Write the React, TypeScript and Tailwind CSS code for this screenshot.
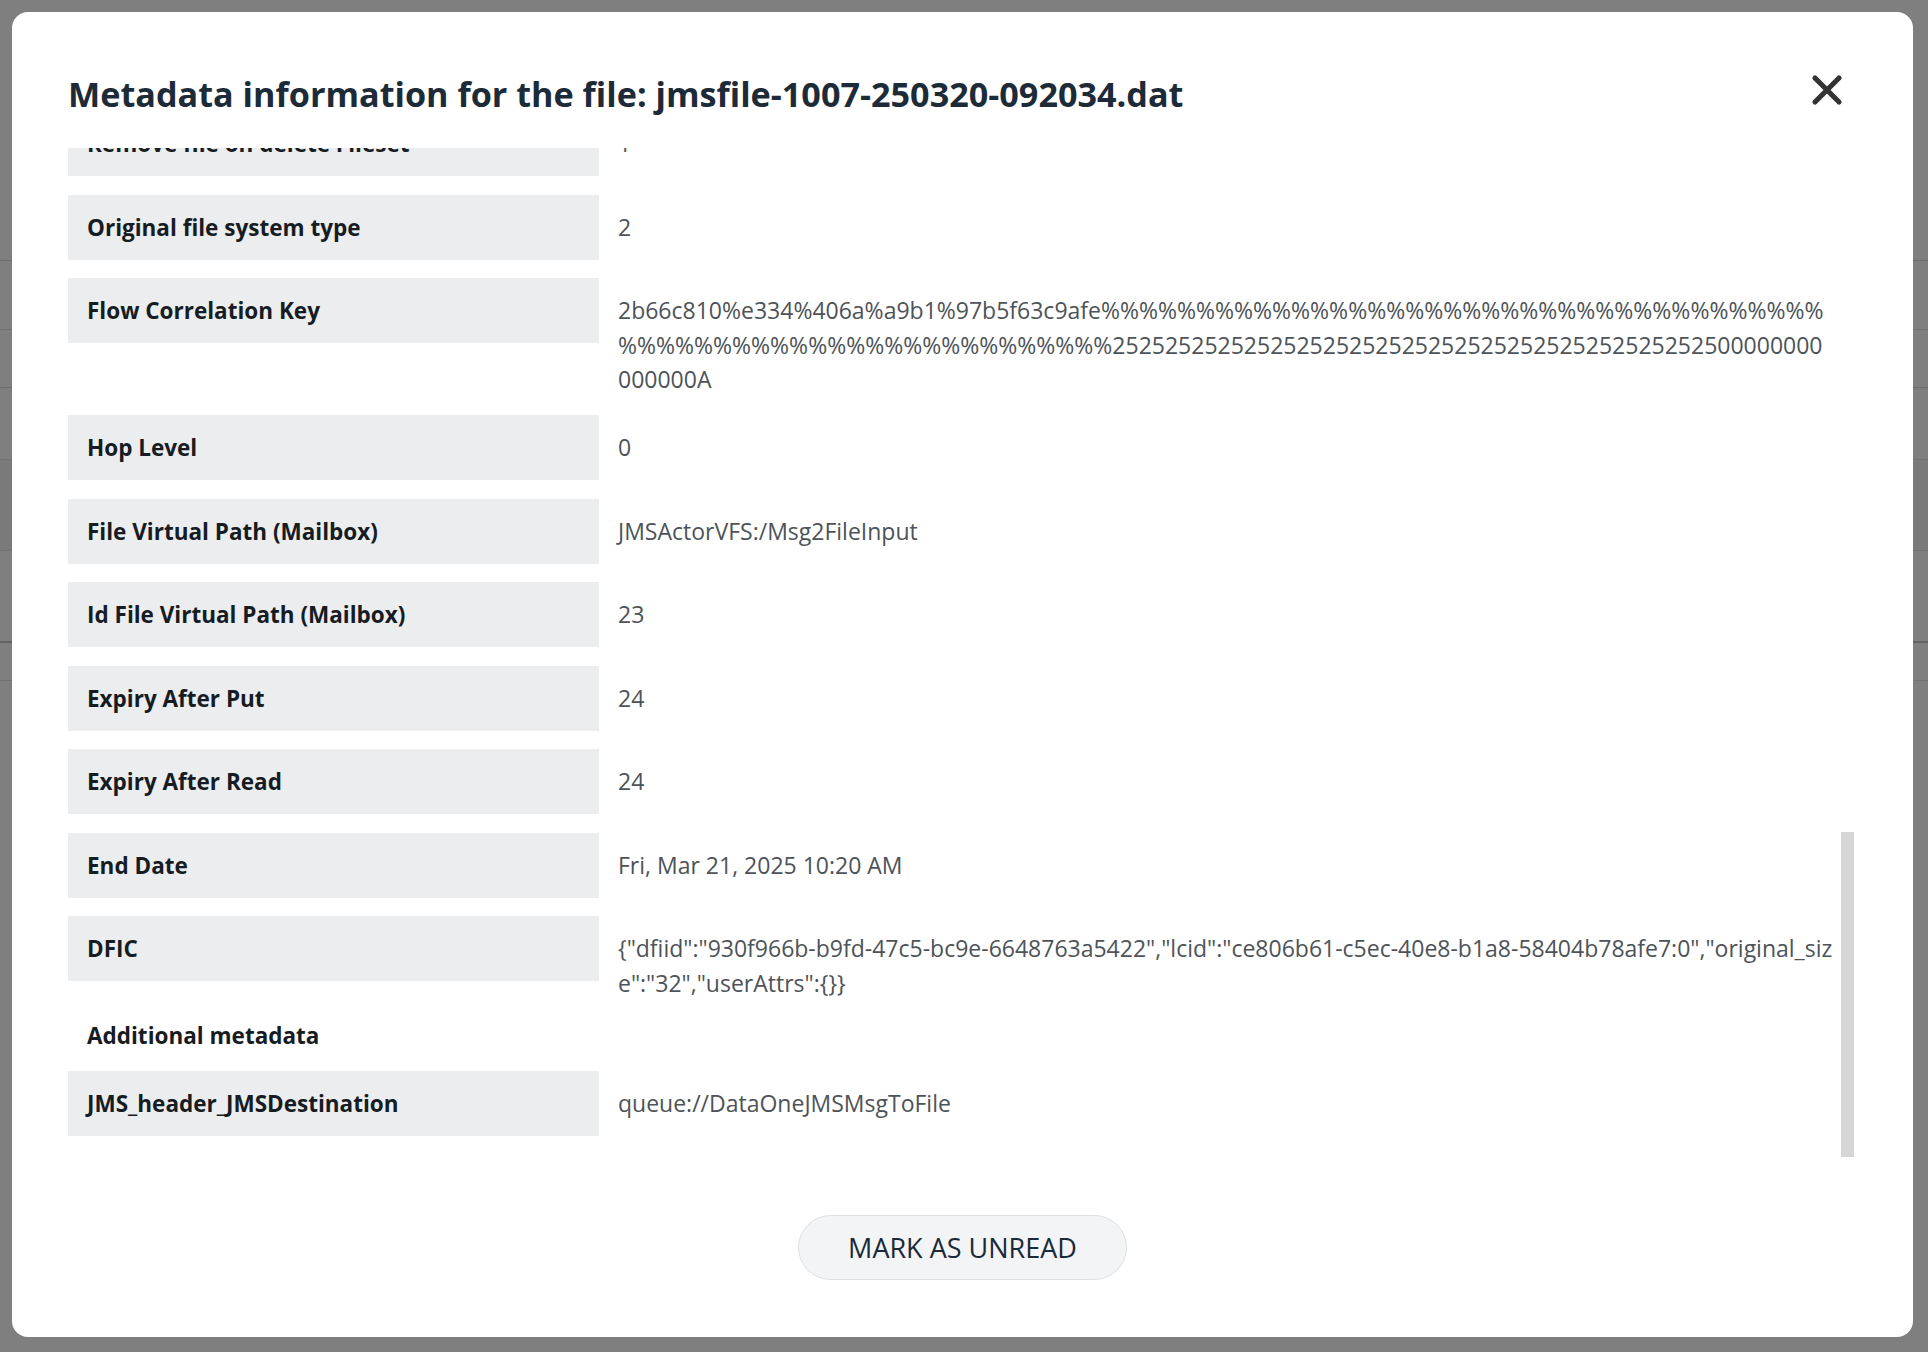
import React from "react";

const flowKey =
  "2b66c810%e334%406a%a9b1%97b5f63c9afe" +
  "%".repeat(64) +
  "25".repeat(23) +
  "0".repeat(14) +
  "A";

const dfic =
  '{"dfiid":"930f966b-b9fd-47c5-bc9e-6648763a5422","lcid":"ce806b61-c5ec-40e8-b1a8-58404b78afe7:0","original_size":"32","userAttrs":{}}';

const rows: [string, string][] = [
  ["Document Id", "jmsfile-1007-250320-092034"],
  ["Original file size", "32"],
  ["Content type", "application/octet-stream"],
  ["Remove file on delete Fileset", "1"],
  ["Original file system type", "2"],
  ["Flow Correlation Key", flowKey],
  ["Hop Level", "0"],
  ["File Virtual Path (Mailbox)", "JMSActorVFS:/Msg2FileInput"],
  ["Id File Virtual Path (Mailbox)", "23"],
  ["Expiry After Put", "24"],
  ["Expiry After Read", "24"],
  ["End Date", "Fri, Mar 21, 2025 10:20 AM"],
  ["DFIC", dfic],
];

function MetaRow({ label, value }: { label: string; value: string }) {
  return (
    <div className="flex items-start">
      <div className="w-[531px] shrink-0 bg-[#ebedef] px-[19px] py-[15px] text-[22.5px] font-bold leading-[35px] text-[#161c22]">
        {label}
      </div>
      <div className="min-w-0 flex-1 break-all pl-[19px] pt-[15px] text-[23px] leading-[34.5px] text-[#4d5358]">
        {value}
      </div>
    </div>
  );
}

function CloseIcon() {
  return (
    <svg width="32" height="32" viewBox="0 0 32 32" fill="none">
      <path d="M4 4L28 28M28 4L4 28" stroke="#333333" strokeWidth="5.2" strokeLinecap="round" />
    </svg>
  );
}

export default function App() {
  return (
    <div className="relative h-screen w-full overflow-hidden bg-white font-['Open_Sans',sans-serif]">
      {/* page behind the overlay */}
      <div className="flex flex-col">
        <div className="h-[261px] border-b border-[#d8d8d8]" />
        <div className="h-[69px] border-b border-[#e4e4e4]" />
        <div className="h-[58px] border-b border-[#d8d8d8]" />
        <div className="h-[72px] border-b border-[#e4e4e4]" />
        <div className="h-[91px] border-b border-[#e4e4e4] bg-[#f4f4f4]" />
        <div className="h-[92px] border-b-2 border-[#c8c8c8]" />
        <div className="h-[38px] border-b border-[#e4e4e4]" />
      </div>

      {/* overlay + modal */}
      <div className="fixed inset-0 bg-black/50">
        <div className="ml-[12px] mt-[12px] flex h-[1325px] w-[1901px] flex-col rounded-[16px] bg-white">
          <div className="flex items-start justify-between pl-[56px] pr-[70px] pt-[60px] pb-[32px]">
            <h1 className="text-[34.2px] font-bold leading-[44px] text-[#1d2b38]">
              Metadata information for the file: jmsfile-1007-250320-092034.dat
            </h1>
            <button className="mt-[2px] h-[32px] w-[32px]">
              <CloseIcon />
            </button>
          </div>

          <div className="flex min-h-0 flex-1 pl-[56px] pr-[59px]">
            <div className="flex min-w-0 flex-1 flex-col justify-end gap-[18.5px] overflow-hidden pb-[21px] pr-[6px]">
              {rows.map(([l, v]) => (
                <MetaRow key={l} label={l} value={v} />
              ))}
              <div className="pl-[19px] text-[22.5px] font-bold leading-[34px] text-[#161c22]">
                Additional metadata
              </div>
              <MetaRow label="JMS_header_JMSDestination" value="queue://DataOneJMSMsgToFile" />
            </div>
            <div className="flex w-[13px] shrink-0 flex-col justify-end">
              <div className="h-[325px] bg-[#d6d6d6]" />
            </div>
          </div>

          <div className="flex justify-center pt-[58px] pb-[57px]">
            <button className="h-[65px] w-[329px] rounded-full border border-[#dde1e3] bg-[#f3f4f5] text-[27px] leading-none text-[#1b2a38]">
              MARK AS UNREAD
            </button>
          </div>
        </div>
      </div>
    </div>
  );
}
